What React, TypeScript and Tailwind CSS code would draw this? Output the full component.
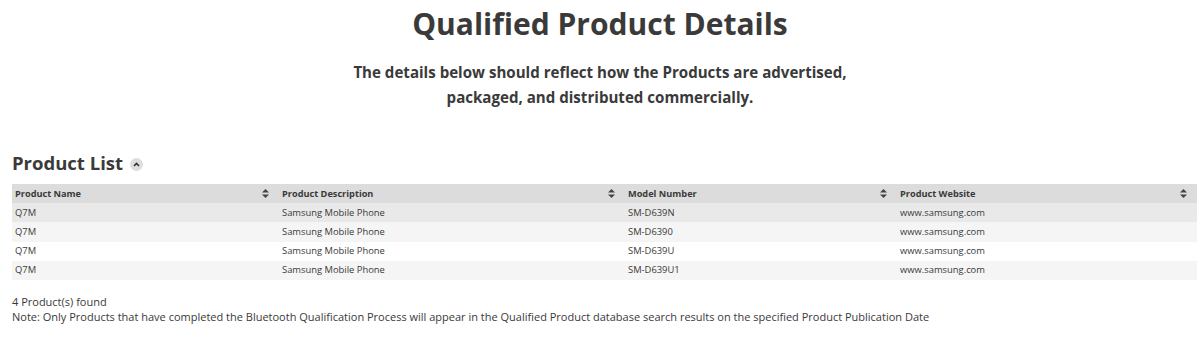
import React from 'react';

const rows = [
  { name: 'Q7M', desc: 'Samsung Mobile Phone', model: 'SM-D639N', site: 'www.samsung.com' },
  { name: 'Q7M', desc: 'Samsung Mobile Phone', model: 'SM-D6390', site: 'www.samsung.com' },
  { name: 'Q7M', desc: 'Samsung Mobile Phone', model: 'SM-D639U', site: 'www.samsung.com' },
  { name: 'Q7M', desc: 'Samsung Mobile Phone', model: 'SM-D639U1', site: 'www.samsung.com' },
];

const rowBg = ['bg-[#e9e9e9]', 'bg-[#f5f5f5]', 'bg-white', 'bg-[#f5f5f5]'];

const SortIcon = () => (
  <svg width="7" height="9" viewBox="0 0 7 9" className="fill-[#444]">
    <path d="M3.5 0 L7 3.6 H0 Z" />
    <path d="M3.5 9 L7 5.4 H0 Z" />
  </svg>
);

const cols = [
  { label: 'Product Name', w: 'w-[267px]' },
  { label: 'Product Description', w: 'w-[346px]' },
  { label: 'Model Number', w: 'w-[272px]' },
  { label: 'Product Website', w: 'flex-1' },
];

export default function App() {
  return (
    <div className="w-[1200px] h-[357px] bg-white text-[#3a3a3a] font-['Open_Sans',sans-serif] overflow-hidden">
      <h1 className="text-center text-[30px] font-bold leading-[36px] pt-[6px]">
        Qualified Product Details
      </h1>
      <p className="text-center text-[15.1px] font-bold leading-[25px] mt-[18px]">
        The details below should reflect how the Products are advertised,
        <br />
        packaged, and distributed commercially.
      </p>

      <div className="px-[12px] mt-[41px]">
        <div className="flex items-center gap-[7px] h-[24px]">
          <h2 className="text-[18.5px] font-bold leading-[24px]">Product List</h2>
          <span className="w-[13px] h-[13px] rounded-full bg-[#dedede] flex items-center justify-center mt-[3px]">
            <svg width="7" height="5" viewBox="0 0 7 5">
              <path d="M1 4 L3.5 1.5 L6 4" stroke="#333" strokeWidth="1.6" fill="none" />
            </svg>
          </span>
        </div>

        <div className="mt-[9px] w-[1185px] text-[9.4px]">
          <div className="flex h-[19px] items-center bg-[#dcdcdc] font-bold text-[9.2px]">
            {cols.map((c) => (
              <div key={c.label} className={`${c.w} flex items-center justify-between pl-[3px] pr-[10px]`}>
                <span>{c.label}</span>
                <SortIcon />
              </div>
            ))}
          </div>
          {rows.map((r, i) => (
            <div key={i} className={`flex h-[19.25px] items-center ${rowBg[i]}`}>
              <div className="w-[267px] pl-[3px]">{r.name}</div>
              <div className="w-[346px] pl-[3px]">{r.desc}</div>
              <div className="w-[272px] pl-[3px]">{r.model}</div>
              <div className="flex-1 pl-[3px]">{r.site}</div>
            </div>
          ))}
        </div>

        <div className="mt-[14px] text-[11px] leading-[15px]">
          <div>4 Product(s) found</div>
          <div>
            Note: Only Products that have completed the Bluetooth Qualification Process will appear in the Qualified
            Product database search results on the specified Product Publication Date
          </div>
        </div>
      </div>
    </div>
  );
}
